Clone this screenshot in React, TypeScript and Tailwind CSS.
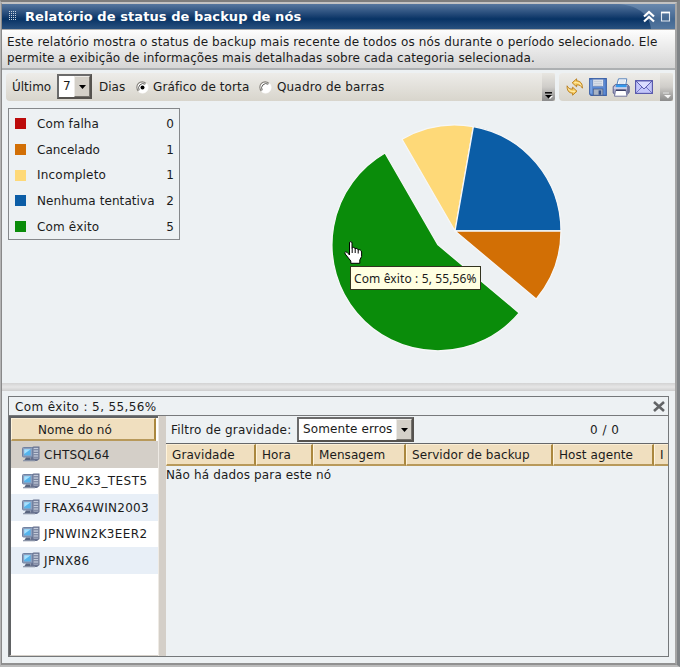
import type { ReactNode } from "react";

const legend = [
  { label: "Com falha", value: 0, color: "bg-[#bc0b0b]", track: "tracking-[0.1px]" },
  { label: "Cancelado", value: 1, color: "bg-[#d26f05]", track: "tracking-[0px]" },
  { label: "Incompleto", value: 1, color: "bg-[#fed978]", track: "tracking-[0.2px]" },
  { label: "Nenhuma tentativa", value: 2, color: "bg-[#0b5da6]", track: "tracking-[0.08px]" },
  { label: "Com êxito", value: 5, color: "bg-[#0a8c0a]", track: "tracking-[0.15px]" },
];

const nodes = [
  { name: "CHTSQL64", row: "bg-[#d4cfc8]", track: "tracking-[0.25px]" },
  { name: "ENU_2K3_TEST5", row: "bg-white", track: "tracking-[0.42px]" },
  { name: "FRAX64WIN2003", row: "bg-[#e8eff7]", track: "tracking-[0.27px]" },
  { name: "JPNWIN2K3EER2", row: "bg-white", track: "tracking-[0.4px]" },
  { name: "JPNX86", row: "bg-[#e8eff7]", track: "tracking-[0.4px]" },
];

const columns = [
  { name: "Gravidade", width: "w-[90px]" },
  { name: "Hora", width: "w-[57px]" },
  { name: "Mensagem", width: "w-[93px]" },
  { name: "Servidor de backup", width: "w-[147px]" },
  { name: "Host agente", width: "w-[101px]" },
  { name: "I", width: "w-[60px]" },
];

function ServerIcon() {
  return (
    <svg className="block h-4 w-[19px] shrink-0" viewBox="0 0 19 16">
      <path d="M8.5 2 L11.5 0.5 H17.5 V13 L15 15 H8.5 Z" fill="#67718e" />
      <path d="M11.5 1.8 H16.3 V12.5 H11.5 Z" fill="#c3cbdb" />
      <path d="M11.5 3.8 H16.3 M11.5 6.3 H16.3 M11.5 8.8 H16.3 M11.5 11.2 H16.3" stroke="#5d6987" strokeWidth="0.9" />
      <rect x="0.5" y="1.5" width="10" height="9.5" rx="1" fill="#8fa0bd" stroke="#7082a2" />
      <rect x="2.2" y="3.2" width="6.4" height="6.2" fill="#55b4ec" />
      <path d="M2.2 3.2 H8.6 L2.2 8 Z" fill="#a9e0fc" />
      <path d="M4 11.5 H8 L9 14.7 H2 Z" fill="#59657f" />
      <path d="M1 14.7 H13" stroke="#8b93a8" strokeWidth="1.2" />
    </svg>
  );
}

function Radio({ checked }: { checked?: boolean }) {
  return (
    <svg className="block size-[13px] shrink-0" viewBox="0 0 13 13">
      <circle cx="6.5" cy="6.5" r="5.5" fill="#fff" stroke="#fff" />
      <path d="M2.4 10 A5.3 5.3 0 0 1 10 2.4" fill="none" stroke="#807d77" strokeWidth="1.1" />
      <path d="M3.2 9.2 A4.4 4.4 0 0 1 9.2 3.2" fill="none" stroke="#4b4945" strokeWidth="0.9" />
      {checked && <circle cx="6.5" cy="6.5" r="2" fill="#000" />}
    </svg>
  );
}

function Select({ value, className }: { value: string; className: string }) {
  return (
    <div className={`flex border-2 border-t-[#6b6b6b] border-l-[#6b6b6b] border-r-[#55524e] border-b-[#55524e] bg-white ${className}`}>
      <span className="flex-1 whitespace-nowrap pl-1 leading-[21px]">{value}</span>
      <span className="flex w-4 items-center justify-center border border-t-[#eceae6] border-l-[#eceae6] border-r-[#75726c] border-b-[#75726c] bg-[#d4d0c8]">
        <svg className="block h-1 w-[7px]" viewBox="0 0 7 4">
          <path d="M0 0 H7 L3.5 4 Z" fill="#000" />
        </svg>
      </span>
    </div>
  );
}

function ToolbarEnd({ muted }: { muted?: boolean }) {
  return (
    <div className="flex w-[13px] items-end justify-center rounded-r-[3px] bg-linear-to-b from-[#e8e6e1] via-[#cfcdc9] to-[#8b8b8b] pb-[2px]">
      <svg className="block h-[7px] w-[9px]" viewBox="0 0 9 7">
        {muted ? (
          <>
            <path d="M1 1 H7" stroke="#d5d5d5" strokeWidth="1.4" />
            <path d="M2 3 H9 L6 6.5 Z" fill="#f5f5f5" />
          </>
        ) : (
          <>
            <path d="M2 4 H9 L6 7 Z" fill="#fff" />
            <path d="M1 0.8 H8" stroke="#000" strokeWidth="1.4" />
            <path d="M1 3 H8 L4.5 6.5 Z" fill="#000" />
          </>
        )}
      </svg>
    </div>
  );
}

function RefreshIcon() {
  return (
    <svg className="block size-[18px]" viewBox="0 0 18 18">
      <g fill="#f9cf63" stroke="#b67a1c" strokeWidth="0.9" strokeLinejoin="round">
        <path d="M10.6 0.8 V2.8 C14.5 3 16.6 5.6 16.4 10.2 C15.4 7.9 13.6 6.7 10.6 6.9 V8.8 L6.2 4.8 Z" />
        <path d="M6.6 17.2 V15.2 C2.7 15 0.9 12.4 1.1 7.8 C2.1 10.1 3.9 11.3 6.6 11.1 V9.2 L11 13.2 Z" />
      </g>
      <path d="M8.2 4.8 C11.5 4 14 5 15.2 7.6 M9 13.2 C5.6 14 3.4 13 2.3 10.6" fill="none" stroke="#ffeeb5" strokeWidth="1" />
    </svg>
  );
}

function SaveIcon() {
  return (
    <svg className="block size-[18px]" viewBox="0 0 18 18">
      <path d="M0.7 0.7 H17.3 V17.3 H2 L0.7 16 Z" fill="#5b8bd6" stroke="#3d62a8" strokeWidth="1.2" />
      <path d="M2 2 V15.5" stroke="#94b8ee" />
      <rect x="3.8" y="1.2" width="10.6" height="7.4" fill="#dfe5ee" stroke="#6482b8" strokeWidth="0.7" />
      <path d="M5 3.3 H13 M5 5.3 H13 M5 7.2 H13" stroke="#b5bfce" strokeWidth="0.8" />
      <rect x="4.3" y="11" width="9.6" height="6.2" fill="#a9b4c4" stroke="#4a5f8c" strokeWidth="0.8" />
      <rect x="9.6" y="12.4" width="2.6" height="4.3" fill="#34508a" />
    </svg>
  );
}

function PrintIcon() {
  return (
    <svg className="block h-[19px] w-[18px]" viewBox="0 0 18 19">
      <path d="M4.5 8 L6.5 0.8 H14.8 L13.6 8 Z" fill="#fafdff" stroke="#5a83ba" />
      <path d="M7.5 3 H13 M7 5 H12.5" stroke="#b9c8dd" strokeWidth="0.8" />
      <path d="M1.2 8.5 L3.5 6.5 H15.5 L17.2 8.5 V14.5 L15 16.5 H3 L1.2 15 Z" fill="#a9abc9" stroke="#5a5f8c" />
      <path d="M4 6.5 H14.5 V9.5 H4 Z" fill="#3499ec" />
      <path d="M1.8 10 H15" stroke="#e3e5f5" strokeWidth="1.2" />
      <path d="M3.5 12.5 H14 L15 18.2 H2.5 Z" fill="#fff" stroke="#666a94" strokeWidth="0.9" />
      <path d="M4 12.2 H13.8" stroke="#33375c" strokeWidth="1.3" />
      <path d="M16 8 V15" stroke="#65698f" strokeWidth="1.4" />
    </svg>
  );
}

function MailIcon() {
  return (
    <svg className="block h-[14px] w-[18px]" viewBox="0 0 18 14">
      <rect x="0.6" y="0.6" width="16.8" height="12.8" fill="#c3c6fa" stroke="#5354a9" strokeWidth="1.1" />
      <path d="M1 13 L7 7 M17 13 L11 7" stroke="#7173c4" strokeWidth="1" />
      <path d="M1 1 L9 9 L17 1 Z" fill="#dadcff" stroke="#5b5cb0" strokeWidth="1" />
    </svg>
  );
}

function Pie() {
  return (
    <svg className="block h-[281px] w-[488px]" viewBox="185 102 488 281">
      <g stroke="#f6f7f8" strokeWidth="1.3" strokeLinejoin="round">
        <path d="M455 231 L402 139.2 A106 106 0 0 1 473.4 126.6 Z" fill="#fed978" />
        <path d="M455 231 L473.4 126.6 A106 106 0 0 1 561 231 Z" fill="#0b5da6" />
        <path d="M455 231 H561 A106 106 0 0 1 536.2 299.1 Z" fill="#d26f05" />
        <path d="M438 244.8 L519.2 312.9 A106 106 0 1 1 385 153 Z" fill="#0a8c0a" />
      </g>
    </svg>
  );
}

function HandCursor() {
  return (
    <svg className="absolute top-[139px] left-[159px] block h-[23px] w-[19px]" viewBox="0 0 19 23">
      <path
        d="M5.5 14 V2 Q5.5 0.6 6.7 0.6 T8 2 V7.2 Q8.5 6.2 9.7 6.4 T11 7.8 Q12 7 13 7.5 T14.2 9 Q15.2 8.3 16.3 9 T17.6 11 V15.5 L15.8 19 V22.3 H6.8 V20 L1.2 13 Q0.3 11.3 1.7 10.8 Q3 10.6 5.5 14 Z"
        fill="#fff"
        stroke="#000"
        strokeWidth="1"
      />
      <path d="M8.2 7 V12 M11.2 8 V12 M14.2 9 V12.5" stroke="#000" strokeWidth="1" />
    </svg>
  );
}

function HeaderCell({ children, className }: { children: ReactNode; className: string }) {
  return (
    <div className={`shrink-0 overflow-hidden border-t border-r-2 border-b-2 border-l border-t-[#fbeed5] border-r-[#aa873e] border-b-[#b8995a] border-l-[#fff4dc] bg-[#f0dfbf] whitespace-nowrap ${className}`}>
      {children}
    </div>
  );
}

export default function App() {
  return (
    <div className="flex h-[667px] w-[680px] flex-col overflow-hidden border-t-2 border-r-3 border-b-2 border-l border-t-[#7d7d7d] border-r-[#808487] border-b-[#bcbcbc] border-l-[#b4b4b4] bg-[#edf1f3] font-['DejaVu_Sans',sans-serif] text-[12px] text-[#1b1b1b]">
      <div className="flex min-h-0 flex-1 flex-col border-t-2 border-r-2 border-b-2 border-l border-t-[#c3c3c3] border-r-[#a5a5a5] border-b-[#919191] border-l-[#898989]">
        <div className="relative flex h-[25px] shrink-0 items-center bg-linear-to-b from-[#56779f] via-[#073365] via-60% to-[#28517f] pl-[7px] text-white">
          <svg className="absolute inset-y-0 right-0 h-[25px] w-14" viewBox="0 0 56 25">
            <path d="M0 0 H56 V25 H32 C31 13 22 2 0 0 Z" fill="#7e9bbd" fillOpacity=".5" />
          </svg>
          <svg className="block h-[11px] w-[9px]" viewBox="0 0 9 11">
            {[0, 2, 4, 6, 8].map((y) =>
              [0, 2, 4, 6].map((x) => <rect key={`${x}-${y}`} x={x} y={y} width="1" height="1" fill="#c5d0dd" />),
            )}
          </svg>
          <span className="ml-[7px] flex-1 pt-px text-[13px] font-bold tracking-[0.08px] whitespace-nowrap">Relatório de status de backup de nós</span>
          <svg className="relative mr-[4px] block h-[13px] w-[30px]" viewBox="0 0 30 13">
            <path d="M3 6.5 L8 2 L13 6.5 M3 11.5 L8 7 L13 11.5" fill="none" stroke="#fff" strokeWidth="2.2" />
            <path d="M20.5 2.5 H28.5 V11 H20.5 Z" fill="none" stroke="#dfe6ee" strokeWidth="1.1" />
            <path d="M20 2.5 H29" stroke="#fff" strokeWidth="1.8" />
          </svg>
        </div>
        <div className="h-[41px] shrink-0 border-t border-b-2 border-t-[#aaaaaa] border-b-[#adb0b2] bg-linear-to-b from-[#fdfdfd] to-[#d6d6d6] pt-[4px] pl-[5px] leading-[16px] whitespace-nowrap">
          <p className="tracking-[0.13px]">Este relatório mostra o status de backup mais recente de todos os nós durante o período selecionado. Ele</p>
          <p className="tracking-[0.09px]">permite a exibição de informações mais detalhadas sobre cada categoria selecionada.</p>
        </div>

        <div className="flex h-[31px] shrink-0 gap-1 pt-[3px] pl-1">
          <div className="flex w-[549px] rounded-l-[4px] bg-linear-to-b from-[#edece9] to-[#d8d5cc]">
            <div className="flex flex-1 items-center pl-[6px] whitespace-nowrap">
              <span className="w-[45px]">Último</span>
              <Select value="7" className="mb-px h-[25px] w-[35px]" />
              <span className="ml-[7px] w-[37px]">Dias</span>
              <Radio checked />
              <span className="ml-[4px] w-[106px] tracking-[0.1px]">Gráfico de torta</span>
              <Radio />
              <span className="ml-[5px] tracking-[0.16px]">Quadro de barras</span>
            </div>
            <ToolbarEnd />
          </div>
          <div className="flex w-[114px] rounded-l-[4px] bg-linear-to-b from-[#edece9] to-[#d8d5cc]">
            <div className="flex flex-1 items-center gap-[5px] pl-[7px]">
              <RefreshIcon />
              <SaveIcon />
              <PrintIcon />
              <MailIcon />
            </div>
            <ToolbarEnd muted />
          </div>
        </div>

        <div className="flex h-[282px] shrink-0 pt-px">
          <div className="mt-[6px] ml-[6px] h-[132px] w-[172px] shrink-0 border border-[#85888b] pt-[2px]">
            {legend.map((item) => (
              <div key={item.label} className="flex h-[25.7px] items-center pl-[6px]">
                <span className={`mr-[11px] size-[11px] ${item.color}`} />
                <span className={`flex-1 whitespace-nowrap ${item.track}`}>{item.label}</span>
                <span className="pr-[5px]">{item.value}</span>
              </div>
            ))}
          </div>
          <div className="relative ml-[5px]">
            <Pie />
            <HandCursor />
            <div className="absolute top-[164px] left-[165px] h-[24px] w-[131px] border border-[#33331f] bg-[#ffffe1] pl-[3px] font-['Noto_Sans',sans-serif] text-[12px] leading-[23px] tracking-[0.12px] whitespace-nowrap">
              Com êxito : 5, 55,56%
            </div>
          </div>
        </div>

        <div className="h-[8px] shrink-0 bg-linear-to-b from-[#d3d3d3] via-[#e6e6e6] to-[#cecece]" />

        <div className="mx-[6px] mt-[5px] flex h-[261px] w-[661px] shrink-0 flex-col border border-[#75787a]">
          <div className="flex h-[19px] shrink-0 items-center border-b border-[#77797b] pl-[6px]">
            <span className="flex-1 pt-[2px] tracking-[0.38px]">Com êxito : 5, 55,56%</span>
            <svg className="mr-[3px] block h-[11px] w-[12px]" viewBox="0 0 12 11">
              <path d="M1 1 L11 10 M11 1 L1 10" stroke="#626466" strokeWidth="2.6" />
            </svg>
          </div>
          <div className="flex min-h-0 flex-1">
            <div className="flex w-[149px] shrink-0 flex-col border-t-2 border-l-2 border-b border-t-[#5f6163] border-l-[#606264] border-b-[#d4cfc8] bg-white">
              <HeaderCell className="h-[23px] w-[145px] pl-[26px] leading-[23px] tracking-[0.1px]">Nome do nó</HeaderCell>
              {nodes.map((node) => (
                <div key={node.name} className={`flex h-[26.5px] items-center pl-[11px] ${node.row}`}>
                  <ServerIcon />
                  <span className={`ml-[3px] pt-px whitespace-nowrap ${node.track}`}>{node.name}</span>
                </div>
              ))}
            </div>
            <div className="w-[8px] shrink-0 border-l border-[#eeeae4] bg-[#d4cfc8]" />
            <div className="flex min-w-0 flex-1 flex-col">
              <div className="flex h-[28px] shrink-0 items-center border-b border-[#66686a] pl-[5px]">
                <span className="w-[126px] tracking-[0.2px] whitespace-nowrap">Filtro de gravidade:</span>
                <Select value="Somente erros" className="h-[25px] w-[117px] tracking-[0.12px]" />
                <span className="ml-[176px] tracking-[0.5px]">0 / 0</span>
              </div>
              <div className="flex h-[22px] overflow-hidden">
                {columns.map((column) => (
                  <HeaderCell key={column.name} className={`h-[22px] pl-[5px] leading-[21px] tracking-[0.08px] ${column.width}`}>
                    {column.name}
                  </HeaderCell>
                ))}
              </div>
              <span className="leading-[18px] tracking-[0.14px]">Não há dados para este nó</span>
            </div>
          </div>
        </div>
      </div>
    </div>
  );
}
